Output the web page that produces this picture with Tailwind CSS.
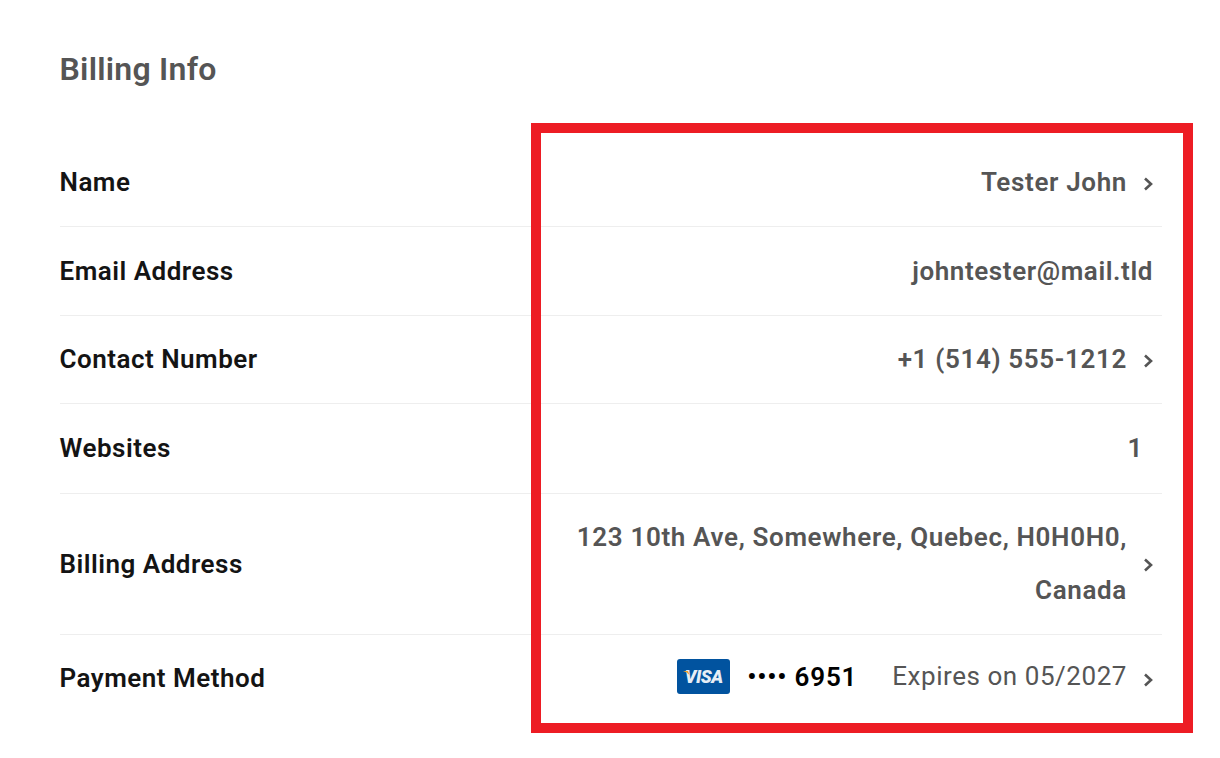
<!DOCTYPE html>
<html>
<head>
<meta charset="utf-8">
<script src="https://cdn.jsdelivr.net/npm/@tailwindcss/browser@4"></script>
</head>
<body class="bg-white">
<div class="relative w-[1220px] h-[758px] overflow-hidden font-['Roboto',sans-serif]">
  <div class="pl-[59.5px] pr-[58px]">
    <h2 class="pt-[49px] h-[138px] text-[32px] leading-[40px] font-semibold tracking-[0.25px] text-[#555555]">Billing Info</h2>

    <div class="flex items-center justify-between h-[89px] border-b border-[#eeeeee]">
      <span class="text-[26px] font-semibold tracking-[0.5px] text-[#141414]">Name</span>
      <div class="flex items-center pr-[8px]">
        <span class="text-[26px] font-semibold tracking-[0.65px] text-[#555555]">Tester John</span>
        <svg class="ml-[16px] w-[11px] h-[14px] mt-[3px]" viewBox="0 0 11 14" fill="none" stroke="#555555" stroke-width="2.6"><path d="M2 1.5 L8 7 L2 12.5"/></svg>
      </div>
    </div>

    <div class="flex items-center justify-between h-[89px] border-b border-[#eeeeee]">
      <span class="text-[26px] font-semibold tracking-[0.5px] text-[#141414]">Email Address</span>
      <div class="flex items-center pr-[9px]">
        <span class="text-[26px] font-semibold tracking-[0.6px] text-[#555555]">johntester@mail.tld</span>
      </div>
    </div>

    <div class="flex items-center justify-between h-[88px] border-b border-[#eeeeee]">
      <span class="text-[26px] font-semibold tracking-[0.5px] text-[#141414]">Contact Number</span>
      <div class="flex items-center pr-[8px]">
        <span class="text-[26px] font-semibold tracking-[0.65px] text-[#555555]">+1 (514) 555-1212</span>
        <svg class="ml-[16px] w-[11px] h-[14px] mt-[3px]" viewBox="0 0 11 14" fill="none" stroke="#555555" stroke-width="2.6"><path d="M2 1.5 L8 7 L2 12.5"/></svg>
      </div>
    </div>

    <div class="flex items-center justify-between h-[90px] border-b border-[#eeeeee]">
      <span class="text-[26px] font-semibold tracking-[0.5px] text-[#141414]">Websites</span>
      <div class="flex items-center pr-[19px]">
        <span class="text-[26px] font-semibold tracking-[0.6px] text-[#555555]">1</span>
      </div>
    </div>

    <div class="flex items-center justify-between h-[141px] border-b border-[#eeeeee]">
      <span class="text-[26px] font-semibold tracking-[0.5px] text-[#141414]">Billing Address</span>
      <div class="flex items-center pr-[8px]">
        <span class="w-[560px] text-right text-[26px] leading-[53px] font-semibold tracking-[0.65px] text-[#555555]">123 10th Ave, Somewhere, Quebec, H0H0H0, Canada</span>
        <svg class="ml-[16px] w-[11px] h-[14px] mt-[2px]" viewBox="0 0 11 14" fill="none" stroke="#555555" stroke-width="2.6"><path d="M2 1.5 L8 7 L2 12.5"/></svg>
      </div>
    </div>

    <div class="flex items-center justify-between h-[87px]">
      <span class="text-[26px] font-semibold tracking-[0.5px] text-[#141414]">Payment Method</span>
      <div class="flex items-center pr-[8px]">
        <div class="relative flex items-center justify-center w-[53px] h-[35px] mt-[-4px] rounded-[3px] bg-[#01539f] mr-[17px]">
          <span class="text-[18px] leading-none font-black italic text-[#e6edf5] tracking-[-0.4px]">VISA</span>
          <svg class="absolute left-[6px] top-[12px] w-[7px] h-[5px]" viewBox="0 0 7 5"><path d="M0 0 H5 L6.5 4 Q4 1 0 0 Z" fill="#f0a030"/></svg>
        </div>
        <span class="text-[26px] font-semibold tracking-[0.8px] text-black mr-[35px] mt-[-3px]">•••• 6951</span>
        <span class="text-[26px] tracking-[0.55px] text-[#555555] mt-[-4px]">Expires on 05/2027</span>
        <svg class="ml-[16px] w-[11px] h-[14px] mt-[2px]" viewBox="0 0 11 14" fill="none" stroke="#555555" stroke-width="2.6"><path d="M2 1.5 L8 7 L2 12.5"/></svg>
      </div>
    </div>
  </div>

  <div class="absolute left-[531px] top-[123px] w-[662px] h-[610px] border-[10px] border-[#ed1c24]"></div>
</div>
</body>
</html>
